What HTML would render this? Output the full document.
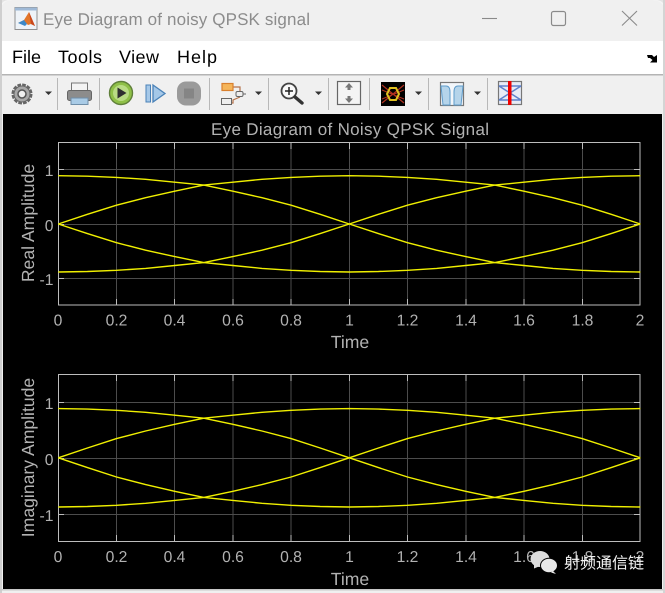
<!DOCTYPE html>
<html><head><meta charset="utf-8"><style>
html,body{margin:0;padding:0;background:#f5f5f5}
svg{display:block}
text{font-family:"Liberation Sans","Noto Sans CJK SC",sans-serif;text-rendering:geometricPrecision}
.t{fill:#b2b2b2;font-size:15.7px}
.l{fill:#b2b2b2;font-size:17.6px}
.c{fill:none;stroke:#f0f000;stroke-width:1.4;stroke-linejoin:round}
</style></head><body>
<svg width="665" height="593" viewBox="0 0 665 593" xmlns="http://www.w3.org/2000/svg">
<rect width="665" height="593" fill="#f5f5f5"/>
<path d="M0 593V14Q0 0 14 0H651Q665 0 665 14V593Z" fill="#f0f0f0"/>
<path d="M0 0H10Q0 0 0 10ZM665 0H655Q665 0 665 10Z" fill="#e4e4e4"/>
<rect x="0" y="0" width="2" height="593" fill="#cfcfcf"/>
<rect x="2" y="41" width="661" height="33" fill="#fff"/>
<rect x="2" y="74" width="661" height="1.5" fill="#b4b4b4"/>
<rect x="3" y="114" width="659" height="475" fill="#000"/>
<rect x="0" y="589" width="665" height="1.5" fill="#c8c8c8"/>
<rect x="663" y="0" width="2" height="593" fill="#d4d4d4"/>

<!-- title bar -->
<g>
<rect x="15" y="7.5" width="22" height="22" fill="#eef3f8" stroke="#8f8f8f"/>
<rect x="15" y="7.5" width="22" height="3" fill="#9fb9d6"/>
<path d="M18 23L24 20L29 12L35 26L31 24L28 25L25 22Z" fill="#e2762a"/>
<path d="M18 23L24 20L27 24L25 26Z" fill="#3d88c7"/>
<path d="M29 12L35 26L31 24Z" fill="#c9481e"/>
</g>
<text x="43" y="25" font-size="17" fill="#8c8c8c" textLength="267" lengthAdjust="spacing">Eye Diagram of noisy QPSK signal</text>
<path d="M482 18.5H497" stroke="#8a8a8a" stroke-width="1.1"/>
<rect x="551.5" y="11.5" width="14" height="14" rx="2" fill="none" stroke="#8a8a8a" stroke-width="1.2"/>
<path d="M622 11L637 25.5M637 11L622 25.5" stroke="#8a8a8a" stroke-width="1.1"/>

<!-- menu -->
<g font-size="18" fill="#000">
<text x="12" y="63" textLength="29" lengthAdjust="spacing">File</text><text x="58" y="63" textLength="44" lengthAdjust="spacing">Tools</text><text x="119" y="63" textLength="40" lengthAdjust="spacing">View</text><text x="177" y="63" textLength="40" lengthAdjust="spacing">Help</text>
</g>
<path d="M647 55H652L654 57L657 55V62.5H650L652.5 60L650 58H648Z" fill="#000"/>

<!-- toolbar separators -->
<g stroke="#b8b8b8" stroke-width="1">
<path d="M57.5 78V110M99.5 78V110M209.5 78V110M268.5 78V110M328.5 78V110M369.5 78V110M428.5 78V110M487.5 78V110"/>
</g>
<!-- dropdown arrows -->
<g fill="#333">
<path d="M45 91.5H52L48.5 95ZM255 91.5H262L258.5 95ZM315 91.5H322L318.5 95ZM415 91.5H422L418.5 95ZM474 91.5H481L477.5 95Z"/>
</g>
<!-- gear -->
<g>
<circle cx="22" cy="94" r="9" fill="none" stroke="#666" stroke-width="3" stroke-dasharray="3.6 1.1"/>
<circle cx="22" cy="94" r="8" fill="#a8a8a8" stroke="#666"/>
<circle cx="22" cy="94" r="4" fill="#f0f0f0" stroke="#555" stroke-width="1.5"/>
</g>
<!-- printer -->
<g>
<rect x="71.5" y="83" width="16" height="8" fill="#f4f4f4" stroke="#777"/>
<rect x="67.5" y="90.5" width="24" height="10" rx="2" fill="#8c8c8c" stroke="#666"/>
<rect x="71" y="98" width="17" height="6.5" fill="#a9cbe6" stroke="#6f8ea8"/>
</g>
<!-- play -->
<circle cx="121" cy="93" r="11.5" fill="#8fc048" stroke="#5f7f3a" stroke-width="1.4"/>
<circle cx="121" cy="93" r="8" fill="#b9dc84"/>
<path d="M117.5 87.5L126.5 93L117.5 98.5Z" fill="#2f2f2f"/>
<!-- step -->
<rect x="146" y="85" width="4.5" height="17" fill="#a5c8e8" stroke="#4a82b8"/>
<path d="M153 85L165 93.5L153 102Z" fill="#a5c8e8" stroke="#4a82b8" stroke-width="1.3"/>
<!-- stop -->
<rect x="177" y="81.5" width="24" height="24" rx="9" fill="#9a9a9a"/>
<rect x="184" y="88.5" width="10" height="10" fill="#858585"/>
<!-- structure -->
<g>
<path d="M233 87H240V92M240 97L233 100V103H229" fill="none" stroke="#b5724a" stroke-width="1.2"/>
<rect x="222" y="83.5" width="11" height="7" fill="#f5b55a" stroke="#d9802e" stroke-width="1.2"/>
<rect x="236" y="91.5" width="7" height="5" rx="1.5" fill="#eee" stroke="#666"/>
<path d="M243 94H246" stroke="#666"/>
<rect x="221.5" y="98.5" width="10" height="6" fill="#eee" stroke="#666"/>
</g>
<!-- zoom -->
<circle cx="289" cy="91" r="7.5" fill="#fafafa" stroke="#444" stroke-width="1.8"/>
<path d="M285 91H293M289 87V95" stroke="#222" stroke-width="1.5"/>
<path d="M295 97L302 103" stroke="#333" stroke-width="3.4" stroke-linecap="round"/>
<!-- fit -->
<rect x="337.5" y="81.5" width="23" height="23" fill="#f4f4f4" stroke="#666" stroke-width="1.2"/>
<path d="M345 87.5L349 83L353 87.5H350.5V90H347.5V87.5ZM345 98.5L349 103L353 98.5H350.5V96H347.5V98.5Z" fill="#777"/>
<!-- eye -->
<rect x="381" y="82" width="24" height="24" fill="#000"/>
<path d="M382 85L393 94L404 85M382 103L393 94L404 103M382 90L404 99M382 99L404 90" fill="none" stroke="#b03020" stroke-width="1.2"/>
<path d="M387 94L390 88H396L399 94L396 100H390Z" fill="none" stroke="#e0c020" stroke-width="2"/>
<!-- split -->
<rect x="440.5" y="82.5" width="23" height="23" fill="#f2f6fa" stroke="#777" stroke-width="1.2"/>
<path d="M441 86H446Q450 86 450 92V105H443ZM463 86H458Q454 86 454 92V105H461Z" fill="#b5d4ea" stroke="#5f9ccb"/>
<!-- bands -->
<rect x="498.5" y="81.5" width="23" height="23" fill="#e8ecf6" stroke="#777" stroke-width="1.2"/>
<path d="M499 86H521M499 100H521M499 86L521 100M499 100L521 86" stroke="#5f82cc" stroke-width="1.5" fill="none"/>
<rect x="508" y="81" width="3.5" height="24" fill="#f00000"/>

<!-- plot title -->
<text x="211" y="135" class="l" style="font-size:17px" textLength="278" lengthAdjust="spacing">Eye Diagram of Noisy QPSK Signal</text>

<!-- axes 1 -->
<g stroke="#4c4c4c" stroke-width="1" fill="none">
<path d="M116.5 143V305M174.5 143V305M233 143V305M291 143V305M349.5 143V305M407.5 143V305M466 143V305M524 143V305M582.5 143V305"/>
<path d="M58 169.5H640M58 224.5H640M58 278.5H640"/>
</g>
<g stroke="#bdbdbd" stroke-width="1" fill="none">
<rect x="58.5" y="142.5" width="581.5" height="162.5"/>
<path d="M116.5 305V299M174.5 305V299M233 305V299M291 305V299M349.5 305V299M407.5 305V299M466 305V299M524 305V299M582.5 305V299M116.5 143V149M174.5 143V149M233 143V149M291 143V149M349.5 143V149M407.5 143V149M466 143V149M524 143V149M582.5 143V149"/>
<path d="M58 169.5H64M58 224.5H64M58 278.5H64M640 169.5H634M640 224.5H634M640 278.5H634"/>
</g>
<polyline class="c" points="58.3,224 87.4,214.3 116.5,205.2 145.6,197.7 174.7,191.2 203.8,185.1 232.9,182.2 262,179.3 291.1,177.4 320.2,176.2 349.3,175.7 378.4,176.2 407.5,177.4 436.6,179.3 465.7,182.2 494.8,185.1 523.9,191.2 553,197.7 582.1,205.2 611.2,214.3 640.3,224"/>
<polyline class="c" points="58.3,175.7 87.4,176.2 116.5,177.4 145.6,179.3 174.7,182.2 203.8,185.1 232.9,191.2 262,197.7 291.1,205.2 320.2,214.3 349.3,224 378.4,214.3 407.5,205.2 436.6,197.7 465.7,191.2 494.8,185.1 523.9,182.2 553,179.3 582.1,177.4 611.2,176.2 640.3,175.7"/>
<polyline class="c" points="58.3,224 87.4,233.6 116.5,242.7 145.6,250.2 174.7,256.6 203.8,262.6 232.9,265.5 262,268.4 291.1,270.3 320.2,271.5 349.3,272 378.4,271.5 407.5,270.3 436.6,268.4 465.7,265.5 494.8,262.6 523.9,256.6 553,250.2 582.1,242.7 611.2,233.6 640.3,224"/>
<polyline class="c" points="58.3,272 87.4,271.5 116.5,270.3 145.6,268.4 174.7,265.5 203.8,262.6 232.9,256.6 262,250.2 291.1,242.7 320.2,233.6 349.3,224 378.4,233.6 407.5,242.7 436.6,250.2 465.7,256.6 494.8,262.6 523.9,265.5 553,268.4 582.1,270.3 611.2,271.5 640.3,272"/>
<g class="t" text-anchor="middle">
<text x="58" y="325.5">0</text><text x="116.5" y="325.5">0.2</text><text x="174.5" y="325.5">0.4</text><text x="233" y="325.5">0.6</text><text x="291" y="325.5">0.8</text><text x="349.5" y="325.5">1</text><text x="407.5" y="325.5">1.2</text><text x="466" y="325.5">1.4</text><text x="524" y="325.5">1.6</text><text x="582.5" y="325.5">1.8</text><text x="640" y="325.5">2</text>
</g>
<g class="t" text-anchor="end">
<text x="53.5" y="176">1</text><text x="53.5" y="231">0</text><text x="53.5" y="285">-1</text>
</g>
<text x="350" y="348" text-anchor="middle" class="l">Time</text>
<text transform="translate(34,223) rotate(-90)" text-anchor="middle" class="l">Real Amplitude</text>

<!-- axes 2 -->
<g stroke="#4c4c4c" stroke-width="1" fill="none">
<path d="M116.5 375V541M174.5 375V541M233 375V541M291 375V541M349.5 375V541M407.5 375V541M466 375V541M524 375V541M582.5 375V541"/>
<path d="M58 402.5H640M58 458.5H640M58 514.5H640"/>
</g>
<g stroke="#bdbdbd" stroke-width="1" fill="none">
<rect x="58.5" y="374.5" width="581.5" height="167"/>
<path d="M116.5 541V535M174.5 541V535M233 541V535M291 541V535M349.5 541V535M407.5 541V535M466 541V535M524 541V535M582.5 541V535M116.5 375V381M174.5 375V381M233 375V381M291 375V381M349.5 375V381M407.5 375V381M466 375V381M524 375V381M582.5 375V381"/>
<path d="M58 402.5H64M58 458.5H64M58 514.5H64M640 402.5H634M640 458.5H634M640 514.5H634"/>
</g>
<polyline class="c" points="58.3,457.8 87.4,448 116.5,438.6 145.6,431 174.7,424.3 203.8,418.2 232.9,415.2 262,412.3 291.1,410.3 320.2,409.1 349.3,408.6 378.4,409.1 407.5,410.3 436.6,412.3 465.7,415.2 494.8,418.2 523.9,424.3 553,431 582.1,438.6 611.2,448 640.3,457.8"/>
<polyline class="c" points="58.3,408.6 87.4,409.1 116.5,410.3 145.6,412.3 174.7,415.2 203.8,418.2 232.9,424.3 262,431 291.1,438.6 320.2,448 349.3,457.8 378.4,448 407.5,438.6 436.6,431 465.7,424.3 494.8,418.2 523.9,415.2 553,412.3 582.1,410.3 611.2,409.1 640.3,408.6"/>
<polyline class="c" points="58.3,457.8 87.4,467.6 116.5,477 145.6,484.6 174.7,491.3 203.8,497.4 232.9,500.4 262,503.3 291.1,505.3 320.2,506.5 349.3,507 378.4,506.5 407.5,505.3 436.6,503.3 465.7,500.4 494.8,497.4 523.9,491.3 553,484.6 582.1,477 611.2,467.6 640.3,457.8"/>
<polyline class="c" points="58.3,507 87.4,506.5 116.5,505.3 145.6,503.3 174.7,500.4 203.8,497.4 232.9,491.3 262,484.6 291.1,477 320.2,467.6 349.3,457.8 378.4,467.6 407.5,477 436.6,484.6 465.7,491.3 494.8,497.4 523.9,500.4 553,503.3 582.1,505.3 611.2,506.5 640.3,507"/>
<g class="t" text-anchor="middle">
<text x="58" y="562">0</text><text x="116.5" y="562">0.2</text><text x="174.5" y="562">0.4</text><text x="233" y="562">0.6</text><text x="291" y="562">0.8</text><text x="349.5" y="562">1</text><text x="407.5" y="562">1.2</text><text x="466" y="562">1.4</text><text x="524" y="562">1.6</text><text x="582.5" y="562">1.8</text><text x="640" y="562">2</text>
</g>
<g class="t" text-anchor="end">
<text x="53.5" y="409">1</text><text x="53.5" y="465">0</text><text x="53.5" y="521">-1</text>
</g>
<text x="350" y="585" text-anchor="middle" class="l">Time</text>
<text transform="translate(34,457.5) rotate(-90)" text-anchor="middle" class="l">Imaginary Amplitude</text>

<!-- watermark -->
<ellipse cx="540" cy="559" rx="9.5" ry="8" fill="#dcdcdc"/>
<path d="M534 564L534 568.5L540 566Z" fill="#dcdcdc"/>
<ellipse cx="549" cy="565.5" rx="8.5" ry="7.3" fill="#e8e8e8" stroke="#000" stroke-width="1"/>
<path d="M553 571L556 574L551 572.5Z" fill="#e8e8e8"/>
<text x="564" y="568.5" font-size="16" fill="#f2f2f2" textLength="80" lengthAdjust="spacing">射频通信链</text>
</svg>
</body></html>
